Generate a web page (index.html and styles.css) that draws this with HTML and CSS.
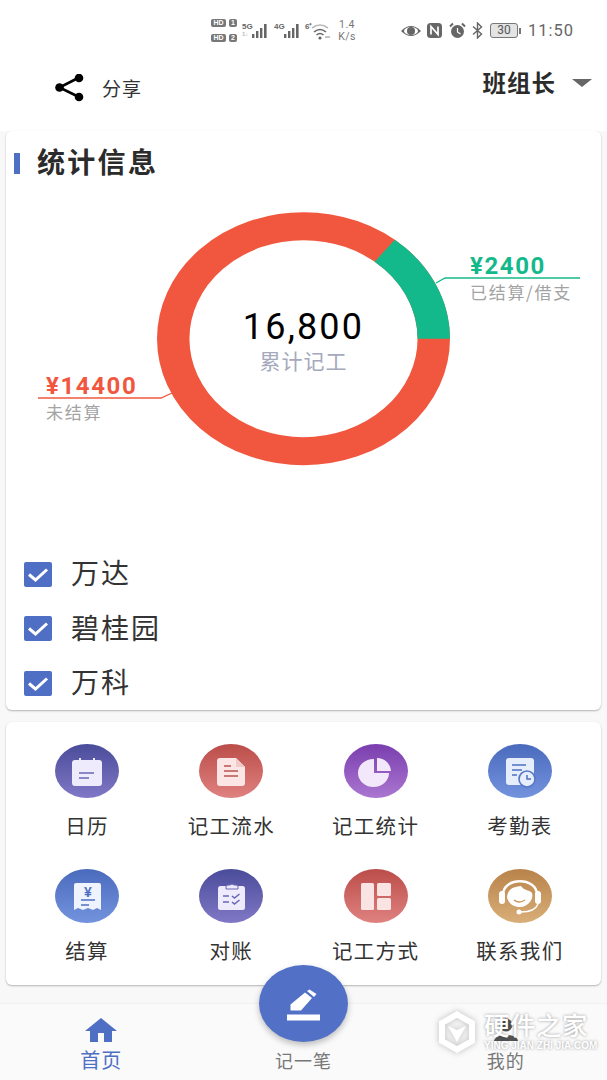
FILE: index.html
```html
<!DOCTYPE html>
<html lang="zh">
<head>
  <meta charset="UTF-8">
  <title>统计信息</title>
  <link rel="stylesheet" href="styles.css">
</head>
<body>
  <div class="page">
    <!-- status bar -->
    <div class="status">
      <div class="sims">
        <div class="sim"><span class="hd">HD</span><span class="slot">1</span></div>
        <div class="sim"><span class="hd">HD</span><span class="slot">2</span></div>
      </div>
      <svg class="st-signal" width="27" height="20" viewBox="0 0 27 20">
        <text x="0" y="8" class="tiny">5G</text>
        <text x="0" y="15" class="tiny light">1↓</text>
        <g fill="#666"><rect x="10" y="13" width="2.400" height="4"/><rect x="14" y="10" width="2.400" height="7"/><rect x="18" y="7" width="2.400" height="10"/><rect x="22" y="3" width="2.600" height="14"/></g>
      </svg>
      <svg class="st-signal2" width="27" height="20" viewBox="0 0 27 20">
        <text x="0" y="8" class="tiny">4G</text>
        <g fill="#666"><rect x="10" y="13" width="2.400" height="4"/><rect x="14" y="10" width="2.400" height="7"/><rect x="18" y="7" width="2.400" height="10"/><rect x="22" y="3" width="2.600" height="14"/></g>
      </svg>
      <svg class="st-wifi" width="25" height="20" viewBox="0 0 25 20">
        <text x="0" y="8" class="tiny">6⁺</text>
        <path d="M7 7Q15 1 23 7" fill="none" stroke="#bbb" stroke-width="1.600"/>
        <path d="M9 11Q15 6 21 11" fill="none" stroke="#666" stroke-width="1.600"/>
        <path d="M11.500 14Q15 11 18.500 14" fill="none" stroke="#666" stroke-width="1.600"/>
        <circle cx="15" cy="17" r="1.600" fill="#666"/>
        <path d="M20 16h5" stroke="#888" stroke-width="1"/>
      </svg>
      <div class="speed">1.4<br>K/s</div>
      <svg class="st-eye" width="20" height="14" viewBox="0 0 20 14">
        <path d="M0 7Q10 -3 20 7Q10 17 0 7Z" fill="#666"/>
        <ellipse cx="10" cy="7" rx="7" ry="4" fill="#fff"/>
        <circle cx="10" cy="7" r="4" fill="#666"/>
      </svg>
      <svg class="st-nfc" width="15" height="15" viewBox="0 0 15 15">
        <rect width="15" height="15" rx="3.500" fill="#666"/>
        <path d="M4 11.500V3.500L11 11.500V3.500" fill="none" stroke="#fff" stroke-width="1.700"/>
      </svg>
      <svg class="st-alarm" width="17" height="17" viewBox="0 0 17 17">
        <circle cx="8.500" cy="9.500" r="6.500" fill="#666"/>
        <path d="M1 4.500L4 1.500M16 4.500L13 1.500" stroke="#666" stroke-width="2"/>
        <path d="M8.500 6v4l3 2" fill="none" stroke="#fff" stroke-width="1.200"/>
      </svg>
      <svg class="st-bt" width="11" height="17" viewBox="0 0 11 17">
        <path d="M1 4.500L9.500 12 5.500 16V1L9.500 5 1 12.500" fill="none" stroke="#666" stroke-width="1.400"/>
      </svg>
      <div class="battery"><span class="battery-box">30</span><span class="battery-tip"></span></div>
      <div class="clock">11:50</div>
    </div>

    <!-- header -->
    <div class="header">
      <div class="share">
        <svg width="30" height="28" viewBox="0 0 30 28">
          <path d="M24 3.500L4.500 13.500L24 23" fill="none" stroke="#000" stroke-width="2.600"/>
          <circle cx="24" cy="4" r="4.300"/>
          <circle cx="4.500" cy="13.500" r="4.300"/>
          <circle cx="24" cy="23" r="4.300"/>
        </svg>
        <span class="share-text">分享</span>
      </div>
      <div class="role">
        <span class="role-text">班组长</span>
        <span class="caret"></span>
      </div>
    </div>

    <!-- stats card -->
    <div class="card stats">
      <div class="card-title"><span class="title-mark"></span><h2>统计信息</h2></div>
      <div class="chart">
        <svg class="donut" width="595" height="372" viewBox="0 0 595 372">
          <g transform="translate(297.500 163.700) scale(1.158 1)">
            <circle r="112.500" fill="none" stroke="#f1573f" stroke-width="28"/>
            <circle r="112.500" fill="none" stroke="#14b98b" stroke-width="28" stroke-dasharray="100.980 605.880" transform="rotate(-51.430)"/>
          </g>
          <path d="M430 108L439 103H574" fill="none" stroke="#14b98b" stroke-width="1.300"/>
          <path d="M32 223H155L166 218" fill="none" stroke="#f1573f" stroke-width="1.300"/>
        </svg>
        <div class="chart-center">
          <div class="total">16,800</div>
          <div class="total-label">累计记工</div>
        </div>
        <div class="tag tag-paid">
          <div class="tag-num">¥2400</div>
          <div class="tag-text">已结算/借支</div>
        </div>
        <div class="tag tag-unpaid">
          <div class="tag-num">¥14400</div>
          <div class="tag-text">未结算</div>
        </div>
      </div>
      <div class="checks">
        <div class="check-row"><span class="check"><svg width="28" height="25" viewBox="0 0 28 25"><path d="M5 12.500L11.500 18L23 7.500" fill="none" stroke="#fff" stroke-width="3"/></svg></span><span class="check-text">万达</span></div>
        <div class="check-row"><span class="check"><svg width="28" height="25" viewBox="0 0 28 25"><path d="M5 12.500L11.500 18L23 7.500" fill="none" stroke="#fff" stroke-width="3"/></svg></span><span class="check-text">碧桂园</span></div>
        <div class="check-row"><span class="check"><svg width="28" height="25" viewBox="0 0 28 25"><path d="M5 12.500L11.500 18L23 7.500" fill="none" stroke="#fff" stroke-width="3"/></svg></span><span class="check-text">万科</span></div>
      </div>
    </div>

    <!-- shortcuts card -->
    <div class="card tools">
      <div class="tool">
        <div class="tool-icon indigo">
          <svg width="64" height="54" viewBox="0 0 64 54">
            <path d="M17 19a3 3 0 0 1 3-3h4v-2h2v2h12v-2h2v2h4a3 3 0 0 1 3 3v20a3 3 0 0 1-3 3H20a3 3 0 0 1-3-3z" fill="#eeecfc"/>
            <path d="M24 29h15M24 34h10" stroke="#6a66b4" stroke-width="1.600"/>
          </svg>
        </div>
        <div class="tool-name">日历</div>
      </div>
      <div class="tool">
        <div class="tool-icon red">
          <svg width="64" height="54" viewBox="0 0 64 54">
            <path d="M21 14h16l9 9v16a3 3 0 0 1-3 3H21a3 3 0 0 1-3-3V17a3 3 0 0 1 3-3z" fill="#fbe6e5"/>
            <path d="M37 14l9 9h-9z" fill="#eecbc9"/>
            <path d="M25 22h7M25 27h14M25 32h14" stroke="#b9534f" stroke-width="1.600"/>
          </svg>
        </div>
        <div class="tool-name">记工流水</div>
      </div>
      <div class="tool">
        <div class="tool-icon purple">
          <svg width="64" height="54" viewBox="0 0 64 54">
            <path d="M30 15v14h15a15.500 14 0 1 1-15-14z" fill="#f3e7fb"/>
            <path d="M33 14a14 14 0 0 1 14 13H33z" fill="#f3e7fb"/>
          </svg>
        </div>
        <div class="tool-name">记工统计</div>
      </div>
      <div class="tool">
        <div class="tool-icon blue">
          <svg width="64" height="54" viewBox="0 0 64 54">
            <rect x="18" y="14" width="28" height="27" rx="3" fill="#e6edfb"/>
            <path d="M24 21h14M24 26h10M24 31h5" stroke="#4f70c2" stroke-width="1.600"/>
            <circle cx="39" cy="35" r="8" fill="#e6edfb" stroke="#5577c8" stroke-width="1.600"/>
            <path d="M39 31v4h4" fill="none" stroke="#4f70c2" stroke-width="1.500"/>
          </svg>
        </div>
        <div class="tool-name">考勤表</div>
      </div>
      <div class="tool">
        <div class="tool-icon blue">
          <svg width="64" height="54" viewBox="0 0 64 54">
            <path d="M20 14h24a2 2 0 0 1 2 2v25l-4-2-4 2-5-2-5 2-5-2-4 2V16a2 2 0 0 1 2-2z" fill="#eef3fd"/>
            <text x="33" y="28" class="yen">¥</text>
            <path d="M26 31h14M26 36h8" stroke="#4f70c2" stroke-width="1.600"/>
          </svg>
        </div>
        <div class="tool-name">结算</div>
      </div>
      <div class="tool">
        <div class="tool-icon indigo">
          <svg width="64" height="54" viewBox="0 0 64 54">
            <rect x="19" y="17" width="27" height="24" rx="2.500" fill="#eeecfc"/>
            <path d="M27 20v-2a2 2 0 0 1 2-2h2a3 3 0 0 1 4 0h2a2 2 0 0 1 2 2v2z" fill="#eeecfc" stroke="#6a66b4" stroke-width="1"/>
            <path d="M24 27h6M24 33h6" stroke="#6a66b4" stroke-width="1.700"/>
            <path d="M33 27l2.500 2 5-4M33 33l2.500 2 5-4" fill="none" stroke="#6a66b4" stroke-width="1.600"/>
          </svg>
        </div>
        <div class="tool-name">对账</div>
      </div>
      <div class="tool">
        <div class="tool-icon red">
          <svg width="64" height="54" viewBox="0 0 64 54">
            <rect x="17" y="14" width="13" height="27" rx="1.500" fill="#f9e4e3"/>
            <rect x="33" y="14" width="14" height="13" rx="1.500" fill="#f9e4e3"/>
            <rect x="33" y="29" width="14" height="12" rx="1.500" fill="#f9e4e3"/>
          </svg>
        </div>
        <div class="tool-name">记工方式</div>
      </div>
      <div class="tool">
        <div class="tool-icon gold">
          <svg width="64" height="54" viewBox="0 0 64 54">
            <path d="M15 25C16 8 48 8 49 25" fill="none" stroke="#fff" stroke-width="2.500"/>
            <rect x="11" y="22" width="6" height="13" rx="3" fill="#fff"/>
            <rect x="47" y="22" width="6" height="13" rx="3" fill="#fff"/>
            <path d="M19 28C20 18 28 18 33 17C36 22 42 21 44 24C46 30 40 38 32 38C25 38 20 34 19 28Z" fill="#fff"/>
            <path d="M26 31Q31 35 37 31" fill="none" stroke="#c99a60" stroke-width="1.500"/>
            <path d="M50 35Q47 43 33 43" fill="none" stroke="#fff" stroke-width="1.500"/>
            <circle cx="31" cy="43" r="2.500" fill="#fff"/>
          </svg>
        </div>
        <div class="tool-name">联系我们</div>
      </div>
    </div>

    <!-- bottom tabs -->
    <div class="tabs">
      <div class="tab tab-on">
        <svg class="tab-icon" width="32" height="24" viewBox="0 0 32 24">
          <path d="M16 0L32 13H27V24H19V15H13V24H5V13H0Z" fill="#4f6fc4"/>
        </svg>
        <div class="tab-name">首页</div>
      </div>
      <div class="tab">
        <div class="tab-icon"></div>
        <div class="tab-name">记一笔</div>
      </div>
      <div class="tab">
        <svg class="tab-icon" width="32" height="24" viewBox="0 0 32 24">
          <circle cx="16" cy="7" r="6.500" fill="#555"/>
          <path d="M4 23C5 15 27 15 28 23Z" fill="#555"/>
        </svg>
        <div class="tab-name">我的</div>
      </div>
      <div class="fab">
        <svg width="33" height="34" viewBox="0 0 33 34">
          <path d="M3.500 23.500V17.500L18 5.500L25 11L14 23.500Z" fill="#fff"/>
          <path d="M20 4L22.500 2.500L29.500 7L27 10Z" fill="#fff"/>
          <rect y="27.500" width="33" height="6" fill="#fff"/>
        </svg>
      </div>
    </div>

    <!-- watermark -->
    <div class="mark">
      <svg width="38" height="42" viewBox="0 0 38 42">
        <path d="M19 3.500L34 12V30L19 38.500L4 30V12Z" fill="none" stroke="#fff" stroke-width="6"/>
        <path d="M10 15L19 19L28 15L19 31Z" fill="#fff"/>
      </svg>
      <div class="mark-text">
        <div class="mark-cn">硬件之家</div>
        <div class="mark-en">YING JIAN ZHI JIA.COM</div>
      </div>
    </div>
  </div>
</body>
</html>
```

FILE: styles.css
```css
* {
  box-sizing: border-box;
}
body {
  margin: 0;
  background: #f8f8f8;
  font-family: "Noto Sans CJK SC", "Liberation Sans", sans-serif;
  color: #333;
}
.page {
  position: relative;
  width: 607px;
  height: 1080px;
  overflow: hidden;
}

/* status bar */
.status {
  height: 60px;
  padding: 19px 0 0 211px;
  background: #fff;
  display: flex;
  align-items: flex-start;
  color: #666;
}
.sims {
  width: 26px;
  display: flex;
  flex-direction: column;
  gap: 7px;
}
.sim {
  display: flex;
  justify-content: space-between;
}
.hd, .slot {
  height: 8px;
  background: #777;
  border-radius: 2px;
  color: #fff;
  font: bold 7px/8px "Liberation Sans", sans-serif;
  text-align: center;
}
.hd { width: 15px; }
.slot { width: 8px; }
.tiny {
  font: bold 8px "Liberation Sans", sans-serif;
  fill: #666;
}
.light {
  fill: #bbb;
  font-size: 6px;
}
.st-signal { margin: 2px 0 0 5px; }
.st-signal2 { margin: 2px 0 0 5px; }
.st-wifi { margin: 2px 0 0 4px; }
.speed {
  margin-left: 7px;
  width: 20px;
  font: 10.500px/12px "Roboto", sans-serif;
  letter-spacing: .4px;
  color: #777;
  text-align: center;
}
.st-eye { margin: 5px 0 0 44px; }
.st-nfc { margin: 4px 0 0 6px; }
.st-alarm { margin: 3px 0 0 7px; }
.st-bt { margin: 3px 0 0 6px; }
.battery {
  margin: 4px 0 0 7px;
  display: flex;
  align-items: center;
}
.battery-box {
  width: 28px;
  height: 15px;
  border: 1px solid #777;
  border-radius: 3px;
  font: 12px/13px "Roboto", sans-serif;
  text-align: center;
  color: #555;
  background: #e4e4e4;
}
.battery-tip {
  width: 2px;
  height: 6px;
  margin-left: 1px;
  background: #777;
}
.clock {
  margin: 2px 0 0 7px;
  font: 16.500px/20px "Roboto", sans-serif;
  letter-spacing: 1px;
  color: #666;
}

/* header */
.header {
  height: 71px;
  padding: 0 15px 0 55px;
  background: #fff;
  display: flex;
  justify-content: space-between;
  align-items: flex-start;
}
.share {
  margin-top: 14px;
  display: flex;
  align-items: center;
}
.share-text {
  margin-left: 17px;
  font-size: 19px;
  letter-spacing: 1px;
  line-height: 28px;
}
.role {
  margin-top: 8px;
  display: flex;
  align-items: center;
}
.role-text {
  font-size: 23.500px;
  font-weight: 700;
  letter-spacing: 1px;
  line-height: 28px;
  color: #2b2b2b;
}
.caret {
  width: 0;
  height: 0;
  margin: 2px 0 0 16px;
  border-left: 10px solid transparent;
  border-right: 10px solid transparent;
  border-top: 8px solid #666;
}

/* cards */
.card {
  margin: 0 6px;
  background: #fff;
  border-radius: 6px;
  box-shadow: 0 1px 2px rgba(0, 0, 0, .28);
}
.stats {
  height: 579px;
}
.card-title {
  height: 44px;
  padding: 20px 0 0 8px;
  display: flex;
  align-items: center;
}
.title-mark {
  width: 6px;
  height: 21px;
  background: #4f6fc4;
}
.card-title h2 {
  margin: 0 0 4px 17px;
  font-size: 28px;
  font-weight: 700;
  letter-spacing: 2.300px;
  line-height: 24px;
  color: #2b2b2b;
}
.chart {
  position: relative;
  height: 372px;
}
.donut {
  display: block;
}
.chart-center {
  position: absolute;
  left: 197px;
  top: 131px;
  width: 201px;
  text-align: center;
}
.total {
  font: 36px/42px "Roboto", sans-serif;
  letter-spacing: 2.200px;
  color: #000;
}
.total-label {
  font-size: 21px;
  letter-spacing: 1px;
  line-height: 24px;
  color: #a5a9bb;
}
.tag {
  position: absolute;
}
.tag-paid {
  left: 464px;
  top: 78px;
}
.tag-unpaid {
  left: 40px;
  top: 198px;
}
.tag-num {
  font: bold 24px/26px "Roboto", sans-serif;
  letter-spacing: 1.600px;
}
.tag-paid .tag-num { color: #14b98b; }
.tag-unpaid .tag-num { color: #f1573f; }
.tag-text {
  font-size: 17px;
  letter-spacing: 1.700px;
  line-height: 26px;
  color: #a3a3a3;
}
.checks {
  padding-left: 18px;
}
.check-row {
  height: 54.500px;
  display: flex;
  align-items: center;
}
.check {
  width: 28px;
  height: 25px;
  border-radius: 2px;
  background: #4f6fc4;
}
.check svg {
  display: block;
}
.check-text {
  margin-left: 19px;
  padding-bottom: 4px;
  font-size: 28px;
  letter-spacing: 2px;
  color: #333;
}

/* shortcuts */
.tools {
  height: 263px;
  margin-top: 12px;
  padding: 22px 9px;
  display: grid;
  grid-template-columns: repeat(4, 1fr);
  row-gap: 31px;
}
.tool {
  height: 94px;
  display: flex;
  flex-direction: column;
  align-items: center;
}
.tool-icon {
  width: 64px;
  height: 54px;
  border-radius: 50%;
}
.tool-icon svg {
  display: block;
}
.indigo { background: linear-gradient(#4a4c9a, #8078c6); }
.red { background: linear-gradient(#bb4d49, #df8280); }
.purple { background: linear-gradient(#7a3eae, #aa76d0); }
.blue { background: linear-gradient(#4a6abc, #7493de); }
.gold { background: linear-gradient(#b8834a, #d9ae78); }
.yen {
  font: bold 14px "Liberation Sans", sans-serif;
  fill: #4f70c2;
  text-anchor: middle;
}
.tool-name {
  margin-top: 15px;
  font-size: 20.500px;
  letter-spacing: 1.300px;
  line-height: 24px;
  white-space: nowrap;
  color: #333;
}

/* bottom tabs */
.tabs {
  position: relative;
  height: 77px;
  margin-top: 18px;
  padding-top: 14px;
  background: #fafafa;
  border-top: 1px solid #f1f1f1;
  display: grid;
  grid-template-columns: repeat(3, 1fr);
}
.tab {
  display: flex;
  flex-direction: column;
  align-items: center;
}
.tab-icon {
  display: block;
  height: 24px;
}
.tab-name {
  margin-top: 6px;
  font-size: 18px;
  letter-spacing: 1px;
  line-height: 24px;
  color: #777;
}
.tab-on .tab-name {
  font-size: 20px;
  letter-spacing: 1px;
  margin-top: 6px;
  color: #4f6fc4;
}
.fab {
  position: absolute;
  left: 259px;
  top: -39px;
  width: 89px;
  height: 77px;
  border-radius: 50%;
  background: #5271c6;
  box-shadow: 0 3px 6px rgba(0, 0, 0, .25);
  display: flex;
  align-items: center;
  justify-content: center;
}

/* watermark */
.mark {
  position: absolute;
  left: 438px;
  top: 1008px;
  display: flex;
  gap: 8px;
  text-shadow: 0 0 3px rgba(0, 0, 0, .4);
}
.mark svg {
  margin-top: 3px;
  filter: drop-shadow(0 0 3px rgba(0, 0, 0, .25));
}
.mark-cn {
  font-size: 25.500px;
  font-weight: 500;
  letter-spacing: .5px;
  line-height: 32px;
  color: #fff;
}
.mark-en {
  font: bold 10px/12px "Liberation Sans", sans-serif;
  color: #fff;
  white-space: nowrap;
}
```
